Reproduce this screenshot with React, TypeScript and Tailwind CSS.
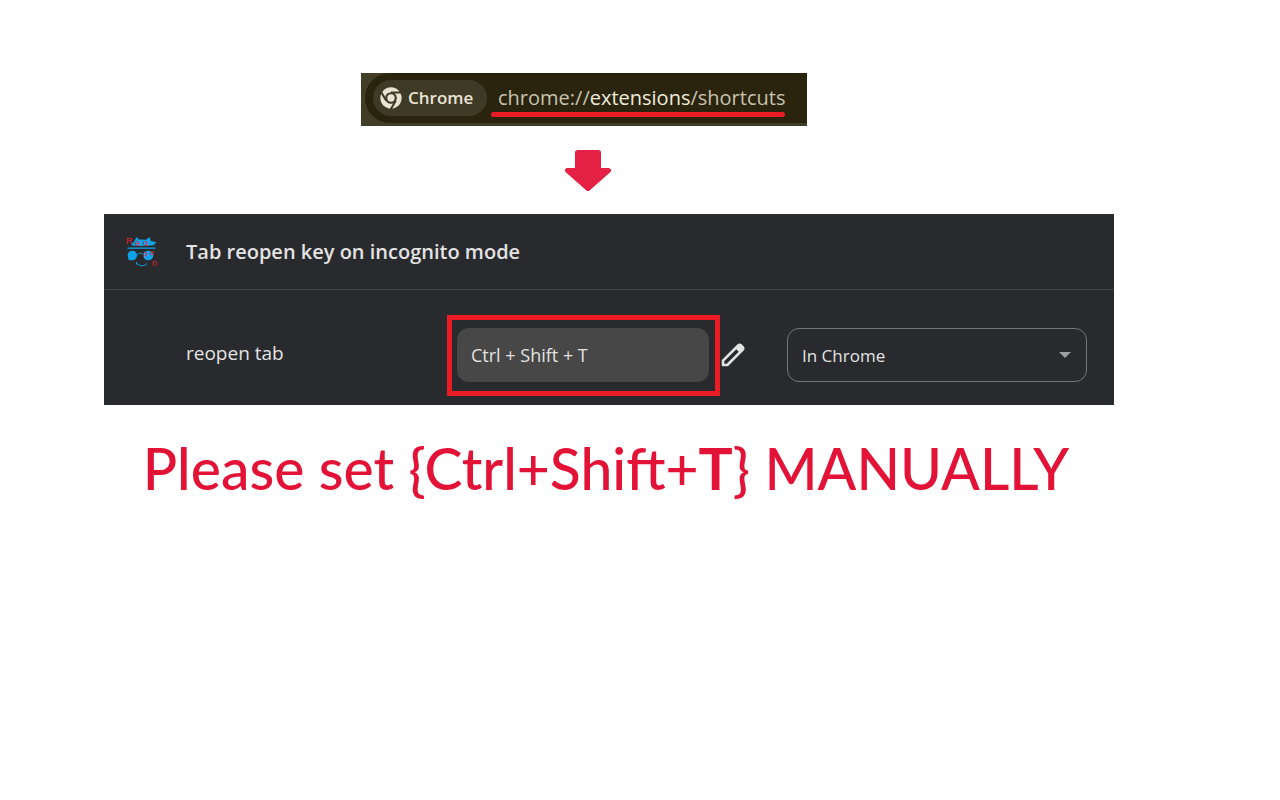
function ChromeLogo() {
  return (
    <svg viewBox="0 0 24 24" className="size-[22px] shrink-0" aria-hidden="true">
      <circle cx="12" cy="12" r="11.6" fill="#eae3d5" />
      <circle cx="12" cy="12" r="5.2" fill="#eae3d5" stroke="#3f3a25" strokeWidth="2.4" />
      <path
        d="M12 6h11M6.8 15 1.3 5.6M17.2 15l-5.5 9.4"
        stroke="#3f3a25"
        strokeWidth="2.2"
        fill="none"
      />
    </svg>
  );
}

function ExtensionLogo() {
  return (
    <svg viewBox="0 1 32 32" className="size-8 shrink-0" aria-hidden="true">
      <g fill="#0ea2e8">
        <path d="M5 10 8.500 6l2-4L13 4.500l7 .2L23.500 2l1.300 4 5.700 1.300-3 3-12 .8-8-.3z" />
        <path d="M1.500 12.500h28v1.300h-28z" />
        <ellipse cx="6.300" cy="20.500" rx="4.700" ry="4.800" />
        <ellipse cx="22.300" cy="20.500" rx="5" ry="4.800" />
      </g>
      <path
        d="M11 20c2-2.500 4.500-2.500 6.500-.3M2 24l3 1M10.500 27l.2 2.500M11 28.500c2.500 3 7.500 3 10 0"
        fill="none"
        stroke="#0ea2e8"
        strokeWidth="1"
      />
      <g fill="#e0222f" fontFamily="'Liberation Sans', sans-serif">
        <text x="0" y="9" fontSize="9">R</text>
        <text x="9" y="11" fontSize="9">e</text>
        <text x="17" y="11" fontSize="9">o</text>
        <text x="17" y="21" fontSize="8">p</text>
        <text x="24" y="20" fontSize="8">e</text>
        <text x="26" y="31" fontSize="9">n</text>
      </g>
    </svg>
  );
}

function AddressBar() {
  return (
    <div className="flex w-[446px] bg-[#423d26] pb-[3px] pl-1">
      <div className="flex h-[50px] flex-1 items-start rounded-l-[25px] bg-[#2a240f] pt-[7px] pl-2">
        <div className="flex h-9 w-[114px] items-center gap-[6px] rounded-full bg-[#3f3a25] pl-[7px] text-[17px] font-semibold text-[#eae3d5]">
          <ChromeLogo />
          Chrome
        </div>
        <div className="ml-1 flex flex-col">
          <p className="pt-1 pl-[7px] text-[20px] leading-[28px] text-[#c8c2ae]">
            chrome://<span className="text-[#f1ebdc]">extensions</span>/shortcuts
          </p>
          <div className="h-[5px] rounded-full bg-[#ed1c24]" />
        </div>
      </div>
    </div>
  );
}

function PencilIcon() {
  return (
    <svg viewBox="0 0 24 24" className="size-6" aria-hidden="true">
      <path
        d="M2 22v-4.300L17.200 2.500a2 2 0 0 1 2.800 0l1.500 1.500a2 2 0 0 1 0 2.800L6.300 22z"
        fill="none"
        stroke="#e3e3e3"
        strokeWidth="2.600"
        strokeLinejoin="round"
      />
      <path d="m14.500 5.500 3-3h2.500l2 2V7l-3 3z" fill="#e3e3e3" />
    </svg>
  );
}

function ShortcutPanel() {
  return (
    <section className="w-full bg-[#292a2d] text-[#e3e3e3]">
      <header className="flex h-[76px] items-center gap-7 border-b border-[#414246] pl-[22px]">
        <ExtensionLogo />
        <h1 className="text-[20px] font-semibold">Tab reopen key on incognito mode</h1>
      </header>
      <div className="flex items-center pt-[25px] pr-[27px] pb-[9px] pl-[82px]">
        <label htmlFor="shortcut" className="flex-1 pb-1 text-[19px]">
          reopen tab
        </label>
        <div className="w-[273px] border-[5px] border-[#ed1c24] pt-2 pr-1.5 pb-[9px] pl-[5px]">
          <input
            id="shortcut"
            readOnly
            defaultValue="Ctrl + Shift + T"
            className="block h-[54px] w-full rounded-xl bg-[#464746] px-3.5 text-[18px] outline-none"
          />
        </div>
        <button type="button" aria-label="Edit shortcut" className="mr-[42px] ml-px pb-px">
          <PencilIcon />
        </button>
        <div className="relative w-[300px] pb-px">
          <select
            aria-label="Scope"
            className="block h-[54px] w-full appearance-none rounded-xl border border-[#757775] bg-transparent px-3.5 pt-0.5 text-[17px] outline-none"
          >
            <option>In Chrome</option>
          </select>
          <svg
            viewBox="0 0 12 6"
            className="pointer-events-none absolute top-6 right-4 h-1.5 w-3"
            aria-hidden="true"
          >
            <path d="M0 0h12L6 6z" fill="#9aa0a6" />
          </svg>
        </div>
      </div>
    </section>
  );
}

export default function App() {
  return (
    <main className="flex min-h-screen flex-col items-center bg-white pt-[73px] pr-[166px] pl-[104px] font-['Open_Sans','Noto_Sans',sans-serif]">
      <div className="mr-[50px] flex flex-col items-center">
        <AddressBar />
        <svg viewBox="0 0 46 42" className="mt-6 mb-[22px] ml-2 h-[42px] w-[46px]" aria-hidden="true">
          <path
            d="M12 0h22l2 1.500V18h8l2 1.500v2L24 41h-2L0 21.500v-2L1.500 18H10V1.500z"
            fill="#e52045"
          />
        </svg>
      </div>
      <ShortcutPanel />
      <p className="mt-7 mr-1.5 text-center font-['Lato',sans-serif] text-[57px] leading-[70px] font-medium whitespace-nowrap text-[#e21336]">
        Please set {"{"}Ctrl+Shift+<b>T</b>
        {"}"} MANUALLY
      </p>
    </main>
  );
}
